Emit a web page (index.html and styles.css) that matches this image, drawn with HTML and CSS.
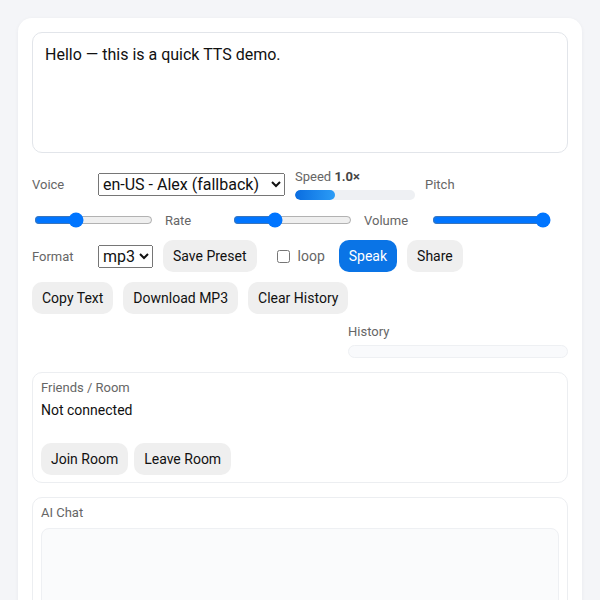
FILE: index.html
```html
<!DOCTYPE html>
<html lang="en">
<head>
<meta charset="utf-8">
<title>TTS Demo</title>
<link rel="stylesheet" href="styles.css">
</head>
<body>
<div class="card">
  <textarea class="text-input">Hello — this is a quick TTS demo.</textarea>

  <div class="controls">
    <label class="lbl">Voice</label>
    <select class="sel voice">
      <option>en-US - Alex (fallback)</option>
    </select>
    <div class="speed">
      <div class="speed-text">Speed <b>1.0×</b></div>
      <div class="speed-bar"><div class="speed-fill" style="width:33%"></div></div>
    </div>
    <label class="lbl">Pitch</label>
    <input class="range" type="range" min="0" max="3" step="0.1" value="1">
    <label class="lbl">Rate</label>
    <input class="range" type="range" min="0" max="3" step="0.1" value="1">
    <label class="lbl">Volume</label>
    <input class="range" type="range" min="0" max="1" step="0.1" value="1">
    <label class="lbl">Format</label>
    <select class="sel">
      <option>mp3</option>
    </select>
    <button class="btn">Save Preset</button>
    <label class="check"><input type="checkbox" class="cb">loop</label>
    <button class="btn primary">Speak</button>
    <button class="btn">Share</button>
  </div>

  <div class="actions">
    <button class="btn">Copy Text</button>
    <button class="btn">Download MP3</button>
    <button class="btn">Clear History</button>
    <div class="history">
      <div class="hist-label">History</div>
      <div class="hist-box"></div>
    </div>
  </div>

  <section class="panel">
    <div class="panel-title">Friends / Room</div>
    <div class="status">Not connected</div>
    <div class="members"></div>
    <div class="panel-actions">
      <button class="btn">Join Room</button>
      <button class="btn">Leave Room</button>
    </div>
  </section>

  <section class="panel">
    <div class="panel-title">AI Chat</div>
    <div class="chat-log"></div>
  </section>
</div>
</body>
</html>
```

FILE: styles.css
```css
html, body {
  margin: 0;
}
body {
  padding: 18px;
  background: #f4f5f8;
  font-family: Roboto, "Liberation Sans", sans-serif;
  color: #111;
}
.card {
  background: #fff;
  border-radius: 14px;
  padding: 14px;
  box-shadow: 0 1px 4px rgba(20, 30, 50, 0.05);
}
.text-input {
  display: block;
  box-sizing: border-box;
  width: 100%;
  height: 121px;
  border: 1px solid #e2e5ea;
  border-radius: 10px;
  padding: 12px;
  font: 16px/19px Roboto, "Liberation Sans", sans-serif;
  color: #111;
  resize: none;
  outline: none;
}
.controls {
  display: flex;
  flex-wrap: wrap;
  align-items: center;
  gap: 10px;
  margin-top: 16px;
}
.lbl {
  min-width: 56px;
  font-size: 13px;
  color: #666;
}
.sel {
  font: 16px Roboto, "Liberation Sans", sans-serif;
  color: #111;
}
.sel.voice {
  width: 187px;
}
.speed {
  width: 120px;
  display: flex;
  flex-direction: column;
  gap: 6px;
}
.speed-text {
  font-size: 13px;
  line-height: 15px;
  color: #666;
}
.speed-text b {
  color: #444;
  font-weight: 700;
}
.speed-bar {
  height: 10px;
  border-radius: 5px;
  background: #eef0f3;
  overflow: hidden;
}
.speed-fill {
  height: 100%;
  border-radius: 5px;
  background: linear-gradient(90deg, #0a6de0, #2b9cf6);
}
.range {
  width: 119px;
  margin: 2px;
}
.btn {
  height: 32px;
  padding: 0 10px;
  border: none;
  border-radius: 10px;
  background: #efefef;
  font: 14px Roboto, "Liberation Sans", sans-serif;
  color: #111;
}
.btn.primary {
  background: #0a74e6;
  color: #fff;
}
.check {
  display: flex;
  align-items: center;
  padding: 0 4px 0 6px;
  font-size: 14px;
  color: #666;
}
.cb {
  margin: 0 8px 0 4px;
}
.actions {
  display: flex;
  flex-wrap: wrap;
  gap: 10px;
  margin-top: 10px;
}
.history {
  width: 220px;
  margin-left: auto;
}
.hist-label {
  font-size: 13px;
  line-height: 15px;
  color: #666;
}
.hist-box {
  margin-top: 6px;
  height: 11px;
  border: 1px solid #eef0f3;
  border-radius: 7px;
  background: #f9fafc;
}
.panel {
  margin-top: 14px;
  border: 1px solid #eceef1;
  border-radius: 10px;
  padding: 7px 8px 7px;
}
.panel-title {
  font-size: 13px;
  line-height: 15px;
  color: #666;
}
.status {
  margin-top: 7px;
  font-size: 14px;
  line-height: 17px;
  color: #111;
}
.members {
  height: 24px;
}
.panel-actions {
  display: flex;
  gap: 6px;
}
.chat-log {
  margin-top: 8px;
  height: 200px;
  border: 1px solid #eef0f3;
  border-radius: 8px;
  background: #fafbfc;
}
```
